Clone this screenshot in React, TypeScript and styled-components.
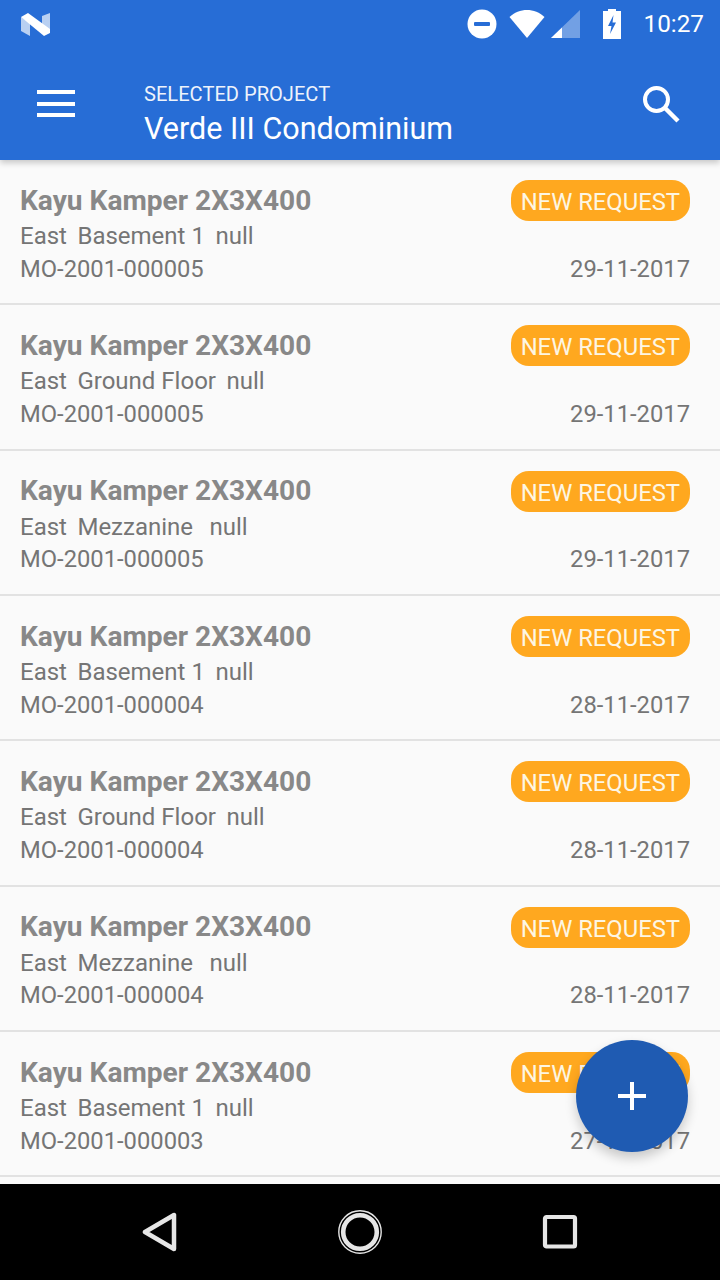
import * as React from 'react';
import styled, { createGlobalStyle } from 'styled-components';

interface Request {
  place: string;
  code: string;
  date: string;
}

const requests: Request[] = [
  { place: 'Basement 1', code: 'MO-2001-000005', date: '29-11-2017' },
  { place: 'Ground Floor', code: 'MO-2001-000005', date: '29-11-2017' },
  { place: 'Mezzanine ', code: 'MO-2001-000005', date: '29-11-2017' },
  { place: 'Basement 1', code: 'MO-2001-000004', date: '28-11-2017' },
  { place: 'Ground Floor', code: 'MO-2001-000004', date: '28-11-2017' },
  { place: 'Mezzanine ', code: 'MO-2001-000004', date: '28-11-2017' },
  { place: 'Basement 1', code: 'MO-2001-000003', date: '27-11-2017' },
];

const GlobalStyle = createGlobalStyle`
  html, body {
    margin: 0;
    padding: 0;
  }
  body {
    font-family: Roboto, "Liberation Sans", sans-serif;
  }
`;

const Screen = styled.div`
  position: relative;
  display: flex;
  flex-direction: column;
  width: 720px;
  height: 1280px;
  overflow: hidden;
  background: #fafafa;
`;

const Header = styled.header`
  position: relative;
  z-index: 2;
  flex: none;
  background: #276dd6;
  box-shadow: 0 3px 6px rgba(0, 0, 0, 0.2);
`;

const StatusBar = styled.div`
  display: flex;
  align-items: center;
  height: 48px;
  padding: 0 16px 0 20px;
  color: #fff;
`;

const StatusIcons = styled.div`
  display: flex;
  align-items: center;
  margin-left: auto;
`;

const Clock = styled.span`
  margin-left: 20px;
  font-size: 24.3px;
  line-height: 50px;
`;

const Toolbar = styled.div`
  display: flex;
  align-items: center;
  height: 112px;
  padding: 0 40px 0 36px;
`;

const ProjectInfo = styled.div`
  flex: 1;
  margin-left: 68px;
  padding-top: 21px;
  color: #fff;
`;

const ProjectLabel = styled.div`
  font-size: 20.1px;
  line-height: 28px;
  opacity: 0.92;
`;

const ProjectName = styled.div`
  font-size: 30.5px;
  line-height: 40px;
  margin-top: 1px;
`;

const List = styled.main`
  flex: 1;
  min-height: 0;
  overflow: hidden;
`;

const Row = styled.div`
  box-sizing: border-box;
  display: grid;
  grid-template-columns: 1fr auto;
  height: 145.33px;
  padding: 20px 30px 0 20px;
  border-bottom: 2px solid #e2e2e2;
  color: #757575;
`;

const Title = styled.div`
  font-size: 28.1px;
  font-weight: 700;
  line-height: 40px;
  margin-top: 0.6px;
  color: #888;
`;

const Place = styled.div`
  display: flex;
  gap: 10.5px;
  font-size: 24px;
  line-height: 32px;
  margin-top: -0.6px;
  white-space: pre;
`;

const Code = styled.div`
  font-size: 23.75px;
  line-height: 32px;
  margin-top: 0.6px;
`;

const RightColumn = styled.div`
  display: flex;
  flex-direction: column;
  align-items: flex-end;
  justify-content: space-between;
  height: 104.6px;
`;

const Badge = styled.span`
  display: block;
  height: 41px;
  padding: 0 10px;
  border-radius: 18px;
  background: #ffa81f;
  color: #fdf6e3;
  font-size: 23.8px;
  line-height: 44px;
`;

const DateText = styled.span`
  font-size: 23.75px;
  line-height: 32px;
`;

const Fab = styled.button`
  position: absolute;
  right: 32px;
  bottom: 128px;
  z-index: 3;
  display: flex;
  align-items: center;
  justify-content: center;
  width: 112px;
  height: 112px;
  padding: 0;
  border: 0;
  border-radius: 50%;
  background: #1f5bb2;
  box-shadow: 0 6px 12px rgba(0, 0, 0, 0.2);
`;

const NavBar = styled.nav`
  position: relative;
  z-index: 4;
  flex: none;
  display: flex;
  align-items: center;
  justify-content: center;
  gap: 160px;
  height: 96px;
  background: #000;
`;

const NougatLogo = () => (
  <svg width="32" height="24" viewBox="0 0 32 24">
    <path d="M1 5 L10 11 V24 L1 19 Z" fill="#b9d0f2" />
    <path d="M30 1 V21 L22 15 V4 Z" fill="#b9d0f2" />
    <path d="M1 5 L8 1 L30 17 V21 L24 24 Z" fill="#fff" />
  </svg>
);

const DndIcon = () => (
  <svg width="30" height="30" viewBox="0 0 30 30">
    <circle cx="15" cy="15" r="14.5" fill="#fff" />
    <rect x="7" y="13" width="16" height="4" rx="1" fill="#276dd6" />
  </svg>
);

const WifiIcon = () => (
  <svg width="36" height="30" viewBox="0 0 36 30" style={{ marginLeft: 12 }}>
    <path d="M0.5 8 C10 -1.5 26 -1.5 35.5 8 L18 29 Z" fill="#fff" />
  </svg>
);

const SignalIcon = () => (
  <svg width="32" height="30" viewBox="0 0 32 30" style={{ marginLeft: 4 }}>
    <path d="M31 1 V29 H2 Z" fill="#fff" opacity="0.35" />
    <path d="M13 18.5 V29 H2 Z" fill="#fff" />
  </svg>
);

const BatteryIcon = () => (
  <svg width="22" height="32" viewBox="0 0 22 32" style={{ marginLeft: 20 }}>
    <path d="M7 1 H15 V3 H20 V31 H2 V3 H7 Z" fill="#fff" />
    <path d="M12.5 7 L7 18 H10.5 L9 26 L15 14.5 H11.5 Z" fill="#276dd6" />
  </svg>
);

const MenuIcon = () => (
  <svg width="40" height="28" viewBox="0 0 40 28">
    <path d="M1 0 H39 V4 H1 Z M1 12 H39 V16 H1 Z M1 23 H39 V27 H1 Z" fill="#fff" />
  </svg>
);

const SearchIcon = () => (
  <svg width="38" height="38" viewBox="0 0 38 38" fill="none" stroke="#fff">
    <circle cx="14.5" cy="14.5" r="11.5" strokeWidth="4" />
    <path d="M23 23 L36 36" strokeWidth="4.4" />
  </svg>
);

const PlusIcon = () => (
  <svg width="28" height="28" viewBox="0 0 28 28">
    <path d="M12 0 H16 V12 H28 V16 H16 V28 H12 V16 H0 V12 H12 Z" fill="#fff" />
  </svg>
);

const BackIcon = () => (
  <svg width="36" height="40" viewBox="0 0 36 40" fill="none">
    <path d="M32 3 V37 L3 20 Z" stroke="#e6e6e6" strokeWidth="4.5" strokeLinejoin="round" />
  </svg>
);

const HomeIcon = () => (
  <svg width="44" height="44" viewBox="0 0 44 44" fill="none" stroke="#e6e6e6">
    <circle cx="22" cy="22" r="21.2" strokeWidth="1.4" />
    <circle cx="22" cy="22" r="16.8" strokeWidth="4.6" />
  </svg>
);

const RecentsIcon = () => (
  <svg width="36" height="36" viewBox="0 0 36 36" fill="none">
    <rect x="3" y="3" width="30" height="29.5" rx="1.5" stroke="#e6e6e6" strokeWidth="4.2" />
  </svg>
);

const RequestRow = ({ place, code, date }: Request) => (
  <Row>
    <div>
      <Title>Kayu Kamper 2X3X400</Title>
      <Place>
        <span>East</span>
        <span>{place}</span>
        <span>null</span>
      </Place>
      <Code>{code}</Code>
    </div>
    <RightColumn>
      <Badge>NEW REQUEST</Badge>
      <DateText>{date}</DateText>
    </RightColumn>
  </Row>
);

const App = () => (
  <Screen>
    <GlobalStyle />
    <Header>
      <StatusBar>
        <NougatLogo />
        <StatusIcons>
          <DndIcon />
          <WifiIcon />
          <SignalIcon />
          <BatteryIcon />
          <Clock>10:27</Clock>
        </StatusIcons>
      </StatusBar>
      <Toolbar>
        <MenuIcon />
        <ProjectInfo>
          <ProjectLabel>SELECTED PROJECT</ProjectLabel>
          <ProjectName>Verde III Condominium</ProjectName>
        </ProjectInfo>
        <SearchIcon />
      </Toolbar>
    </Header>
    <List>
      {requests.map((r, i) => (
        <RequestRow key={i} {...r} />
      ))}
    </List>
    <Fab aria-label="Add">
      <PlusIcon />
    </Fab>
    <NavBar>
      <BackIcon />
      <HomeIcon />
      <RecentsIcon />
    </NavBar>
  </Screen>
);

export default App;
